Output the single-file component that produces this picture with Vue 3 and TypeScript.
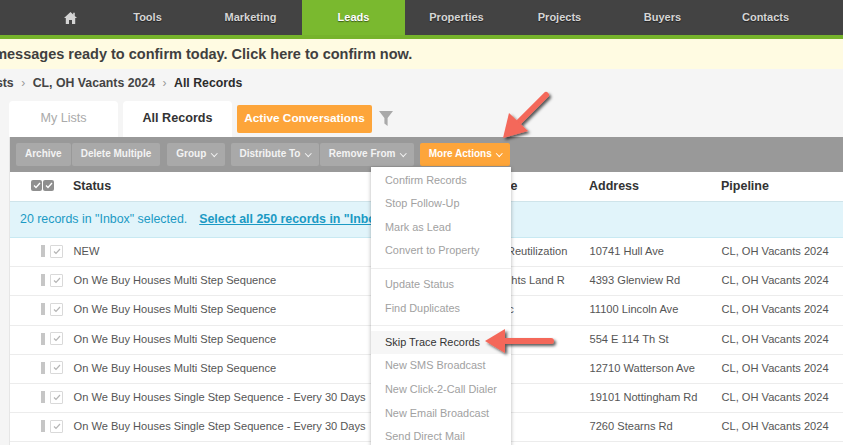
<script setup lang="ts">
const navItems: string[] = ['Tools', 'Marketing', 'Leads', 'Properties', 'Projects', 'Buyers', 'Contacts']
const rows = [
  { status: 'NEW', name: 'Cuyahoga Land Reutilization', address: '10741 Hull Ave' },
  { status: 'On We Buy Houses Multi Step Sequence', name: 'E Cleveland Heights Land R', address: '4393 Glenview Rd' },
  { status: 'On We Buy Houses Multi Step Sequence', name: 'Lincoln House Inc', address: '11100 Lincoln Ave' },
  { status: 'On We Buy Houses Multi Step Sequence', name: '', address: '554 E 114 Th St' },
  { status: 'On We Buy Houses Multi Step Sequence', name: '', address: '12710 Watterson Ave' },
  { status: 'On We Buy Houses Single Step Sequence - Every 30 Days', name: '', address: '19101 Nottingham Rd' },
  { status: 'On We Buy Houses Single Step Sequence - Every 30 Days', name: '', address: '7260 Stearns Rd' }
]
const menuGroups: string[][] = [
  ['Confirm Records', 'Stop Follow-Up', 'Mark as Lead', 'Convert to Property'],
  ['Update Status', 'Find Duplicates'],
  ['Skip Trace Records', 'New SMS Broadcast', 'New Click-2-Call Dialer', 'New Email Broadcast', 'Send Direct Mail']
]
</script>

<template>
  <div class="page">
    <nav class="nav">
      <a class="nav-home" aria-label="Home">
        <svg width="13" height="12" viewBox="0 0 13 12"><path fill="#d4d4d4" d="M6.5 0 0 6h1.8v6h3.2V8h3v4h3.2V6H13L10.8 4V.8H9.2v1.7z"/></svg>
      </a>
      <a v-for="item in navItems" :key="item" class="nav-item" :class="{ active: item === 'Leads' }">{{ item }}</a>
    </nav>

    <div class="banner">10 messages ready to confirm today. Click here to confirm now.</div>

    <div class="crumbs">
      <span>Lists</span><i>›</i><span>CL, OH Vacants 2024</span><i>›</i><b>All Records</b>
    </div>

    <div class="tabs">
      <a class="tab muted">My Lists</a>
      <a class="tab">All Records</a>
      <a class="tab-active">Active Conversations</a>
      <svg class="funnel" width="14" height="15" viewBox="0 0 14 15"><path fill="#a9a9a9" d="M0 0h14L8.6 7v8L5.4 12.6V7z"/></svg>
    </div>

    <section class="panel">
      <div class="toolbar">
        <div class="btn-group">
          <button class="btn">Archive</button>
          <button class="btn">Delete Multiple</button>
        </div>
        <button class="btn group-btn">Group <span class="chev"></span></button>
        <div class="btn-group">
          <button class="btn">Distribute To <span class="chev"></span></button>
          <button class="btn">Remove From <span class="chev"></span></button>
        </div>
        <button class="btn orange">More Actions <span class="chev"></span></button>
      </div>

      <div class="row head">
        <div class="checks">
          <span class="dark-check"><svg width="8" height="7" viewBox="0 0 8 7"><path d="M1 3.5 3 5.5 7 1" fill="none" stroke="#fff" stroke-width="1.3"/></svg></span>
          <span class="dark-check"><svg width="8" height="7" viewBox="0 0 8 7"><path d="M1 3.5 3 5.5 7 1" fill="none" stroke="#fff" stroke-width="1.3"/></svg></span>
        </div>
        <div>Status</div>
        <div>Lead Full Name</div>
        <div>Address</div>
        <div>Pipeline</div>
      </div>

      <div class="notice">
        <span>20 records in "Inbox" selected.</span>
        <a>Select all 250 records in "Inbox"</a>
      </div>

      <div v-for="(r, i) in rows" :key="i" class="row body">
        <div class="checks">
          <span class="handle"></span>
          <span class="check"><svg width="8" height="7" viewBox="0 0 8 7"><path d="M1 3.5 3 5.5 7 1" fill="none" stroke="#b5b5b5" stroke-width="1.2"/></svg></span>
        </div>
        <div class="cell">{{ r.status }}</div>
        <div class="cell">{{ r.name }}</div>
        <div class="cell">{{ r.address }}</div>
        <div class="cell">CL, OH Vacants 2024</div>
      </div>

      <ul class="menu">
        <li v-for="(group, g) in menuGroups" :key="g" class="menu-group">
          <a v-for="m in group" :key="m" class="menu-item" :class="{ on: m === 'Skip Trace Records' }">{{ m }}</a>
        </li>
      </ul>
    </section>

    <svg class="arrow arrow-top" width="70" height="70" viewBox="0 0 70 70">
      <defs>
        <filter id="sh1" x="-30%" y="-30%" width="160%" height="160%"><feDropShadow dx="2" dy="2" stdDeviation="1.6" flood-color="#000" flood-opacity=".65"/></filter>
      </defs>
      <g filter="url(#sh1)">
        <path d="M52 11 22 41" stroke="#f4675a" stroke-width="6" stroke-linecap="round" fill="none"/>
        <path d="M9 54 15 29 34 47z" fill="#f4675a"/>
      </g>
    </svg>
    <svg class="arrow arrow-side" width="80" height="40" viewBox="0 0 80 40">
      <defs>
        <filter id="sh2" x="-30%" y="-30%" width="160%" height="160%"><feDropShadow dx="2" dy="2" stdDeviation="1.6" flood-color="#000" flood-opacity=".65"/></filter>
      </defs>
      <g filter="url(#sh2)">
        <path d="M71 20H26" stroke="#f4675a" stroke-width="6" stroke-linecap="round" fill="none"/>
        <path d="M5 20 25 8V32z" fill="#f4675a"/>
      </g>
    </svg>
  </div>
</template>

<style>
html, body { margin: 0; background: #f5f5f5; }
</style>

<style scoped>
.page {
  position: relative;
  width: 843px;
  height: 445px;
  overflow: hidden;
  background: #f5f5f5;
  font-family: "Liberation Sans", Arial, sans-serif;
  color: #444;
}
.nav {
  display: flex;
  height: 35px;
  padding-left: 44px;
  background: #434343;
  border-bottom: 4px solid #76b32b;
}
.nav-home {
  width: 52px;
  display: flex;
  align-items: center;
  justify-content: center;
}
.nav-item {
  width: 103px;
  text-align: center;
  line-height: 35px;
  font-size: 11px;
  font-weight: 700;
  color: #d6d6d6;
  text-shadow: 0 1px 1px rgba(0, 0, 0, .5);
}
.nav-item.active {
  background: #7ab92f;
  color: #fff;
}
.banner {
  height: 30px;
  line-height: 30px;
  margin-left: -26px;
  background: #fffbe2;
  font-size: 14.5px;
  font-weight: 700;
  color: #3f3f3f;
  white-space: nowrap;
}
.crumbs {
  display: flex;
  align-items: center;
  gap: 7.5px;
  height: 27px;
  margin-left: -15px;
  font-size: 12.3px;
  font-weight: 700;
  color: #444;
}
.crumbs i {
  font-style: normal;
  font-weight: 400;
  color: #999;
  font-size: 12px;
}
.crumbs b { color: #2c2c2c; }
.tabs {
  display: flex;
  align-items: center;
  gap: 5px;
  height: 36px;
  margin-top: 5px;
  padding-left: 9px;
}
.tab {
  width: 109px;
  height: 36px;
  line-height: 35px;
  text-align: center;
  background: #fff;
  border-radius: 4px 4px 0 0;
  font-size: 12.6px;
  font-weight: 700;
  color: #333;
}
.tab.muted { color: #aaa; font-weight: 400; }
.tab-active {
  width: 135px;
  height: 28px;
  line-height: 27px;
  text-align: center;
  background: #fda53a;
  border-radius: 2px;
  font-size: 11.8px;
  font-weight: 700;
  color: #fff;
}
.funnel { margin: -1px 0 0 2px; }
.panel {
  position: relative;
  margin-left: 10px;
  background: #fff;
  height: 308px;
  box-shadow: -1px 0 0 #e6e6e6;
}
.toolbar {
  display: flex;
  align-items: center;
  gap: 6px;
  height: 35px;
  padding-left: 6px;
  background: #999;
  box-sizing: border-box;
}
.btn-group { display: flex; gap: 1px; }
.btn {
  height: 23px;
  padding: 0 9px 2px;
  border: 0;
  border-radius: 2px;
  background: #a9a9a9;
  font: 700 10px "Liberation Sans", Arial, sans-serif;
  color: #f3f3f3;
  white-space: nowrap;
}
.btn.orange { background: #fda53a; color: #fff; }
.group-btn { margin-left: 1px; }
.chev {
  display: inline-block;
  width: 3.5px;
  height: 3.5px;
  margin: 0 -1px 2px 3px;
  border-right: 1px solid currentColor;
  border-bottom: 1px solid currentColor;
  transform: rotate(45deg);
}
.row {
  display: grid;
  grid-template-columns: 63px 352px 164px 132px 1fr;
  align-items: center;
  box-sizing: border-box;
}
.head {
  height: 29px;
  padding-bottom: 2px;
  font-size: 12.5px;
  font-weight: 700;
  color: #333;
}
.body {
  height: 29.2px;
  padding-bottom: 2px;
  border-bottom: 1px solid #ececec;
  font-size: 11.1px;
  color: #555;
}
.cell { white-space: nowrap; padding-left: .5px; }
.checks {
  display: flex;
  align-items: center;
  justify-content: flex-end;
  gap: 1px;
  padding-right: 10px;
}
.head .checks { padding-right: 19px; }
.dark-check {
  display: flex;
  align-items: center;
  justify-content: center;
  width: 11px;
  height: 11px;
  border-radius: 2px;
  background: #8f8f8f;
}
.handle {
  width: 4px;
  height: 12px;
  margin-right: 4px;
  background: #c6c6c6;
}
.check {
  display: flex;
  align-items: center;
  justify-content: center;
  width: 11px;
  height: 11px;
  border: 1px solid #d9d9d9;
  border-radius: 1px;
  background: #fff;
}
.notice {
  display: flex;
  align-items: center;
  gap: 12px;
  height: 37px;
  padding-left: 10px;
  padding-bottom: 2px;
  box-sizing: border-box;
  background: #e1f4fa;
  border-top: 1px solid #cfe4ea;
  border-bottom: 1px solid #c8e9f2;
  font-size: 12.4px;
  color: #1b9ac4;
  white-space: nowrap;
}
.notice a {
  font-weight: 700;
  text-decoration: underline;
}
.menu {
  position: absolute;
  left: 361px;
  top: 30px;
  width: 140px;
  margin: 0;
  padding: 1.5px 0 0;
  list-style: none;
  background: #fff;
  box-shadow: 0 1px 4px rgba(0, 0, 0, .3);
}
.menu-group { padding-bottom: 5px; border-bottom: 1px solid #eee; margin-bottom: 4.4px; }
.menu-item {
  display: block;
  height: 23.6px;
  line-height: 23.6px;
  padding-left: 14px;
  font-size: 10.9px;
  color: #a1a1a1;
  white-space: nowrap;
}
.menu-item.on { background: #f6f6f6; color: #333; }
.arrow {
  position: absolute;
  overflow: visible;
}
.arrow-top { left: 494px; top: 84px; }
.arrow-side { left: 480px; top: 321px; }
</style>
